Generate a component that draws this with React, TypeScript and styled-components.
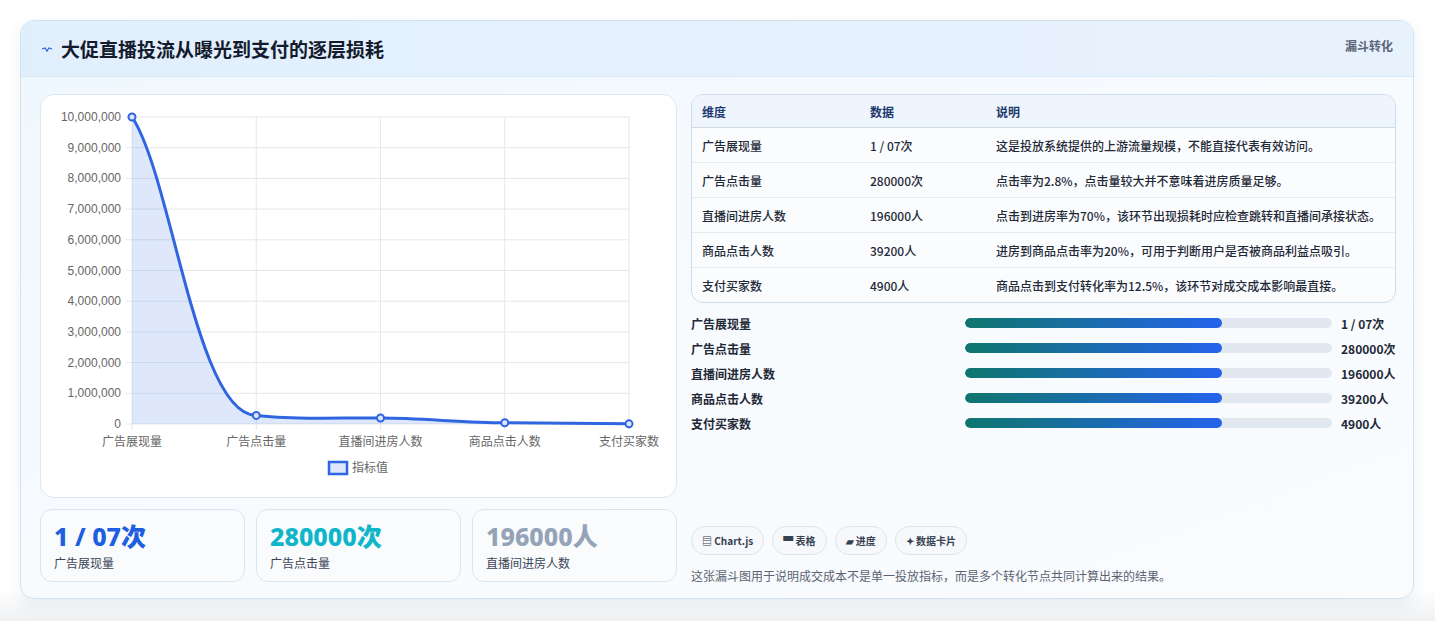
import React from 'react';
import styled, { createGlobalStyle } from 'styled-components';

const Global = createGlobalStyle`
  body {
    margin: 0;
    background: #f1f2f4;
    font-family: "Noto Sans CJK SC", "Noto Sans", sans-serif;
  }
`;

const Page = styled.div`
  height: 621px;
  padding: 20px 21px 0 20px;
  box-sizing: border-box;
  background: linear-gradient(180deg, #fff 0%, #fff 95%, #eef0f2 100%);
`;

const Card = styled.div`
  height: 579px;
  box-sizing: border-box;
  border: 1px solid #cfe3f1;
  border-radius: 14px;
  background: linear-gradient(160deg, #eef7fe 0%, #f8fbfe 55%, #f9fbfd 100%);
  box-shadow: 0 6px 16px rgba(30, 60, 100, 0.08);
  overflow: hidden;
`;

const Header = styled.div`
  height: 55px;
  display: flex;
  align-items: center;
  justify-content: space-between;
  padding: 0 20px 0 20px;
  background: linear-gradient(90deg, #e1effd, #e8f2fd);
  border-bottom: 1px solid #d7e8f6;
`;

const Title = styled.h1`
  margin: 0;
  font-size: 19px;
  font-weight: 700;
  color: #141b2d;
  display: flex;
  align-items: center;
  gap: 8px;
`;

const Tag = styled.span`
  font-size: 12px;
  font-weight: 700;
  color: #5b6779;
  align-self: flex-start;
  margin-top: 16px;
`;

const Body = styled.div`
  display: grid;
  grid-template-columns: 637px 705px;
  gap: 14px;
  padding: 17px 18px 0 19px;
`;

const Col = styled.div`
  display: flex;
  flex-direction: column;
`;

const ChartPanel = styled.div`
  height: 404px;
  box-sizing: border-box;
  background: #fff;
  border: 1px solid #dbe7f1;
  border-radius: 14px;
`;

const Stats = styled.div`
  display: grid;
  grid-template-columns: repeat(3, 1fr);
  gap: 11px;
  margin-top: 11px;
`;

const Stat = styled.div`
  height: 73px;
  box-sizing: border-box;
  border: 1px solid #d8e6f1;
  border-radius: 12px;
  background: #f9fbfd;
  padding: 10px 13px;
`;

const StatValue = styled.div<{ $color: string }>`
  font-size: 25px;
  font-weight: 800;
  line-height: 32px;
  color: ${p => p.$color};
  font-family: "Noto Sans", "Noto Sans CJK SC", sans-serif;
`;

const StatLabel = styled.div`
  font-size: 12px;
  color: #3b4556;
  margin-top: 2px;
`;

const Table = styled.table`
  width: 100%;
  border-collapse: separate;
  border-spacing: 0;
  border: 1px solid #cfdbe8;
  border-radius: 12px;
  overflow: hidden;
  font-size: 12px;
  background: #fafcfe;
  th {
    text-align: left;
    height: 32px;
    padding: 0 10px;
    color: #1e3a6e;
    font-weight: 700;
    background: #eef5fc;
    border-bottom: 1px solid #cfdbe8;
  }
  td {
    height: 34px;
    padding: 0 10px;
    color: #1f2937;
    font-weight: 500;
    border-bottom: 1px solid #e4ecf3;
  }
  tr:last-child td {
    border-bottom: none;
  }
`;

const Bars = styled.div`
  margin-top: 11px;
  display: flex;
  flex-direction: column;
  gap: 7px;
`;

const BarRow = styled.div`
  display: grid;
  grid-template-columns: 265px 367px 1fr;
  gap: 9px;
  align-items: center;
  height: 18px;
  font-size: 12px;
  font-weight: 600;
  color: #1f2937;
`;

const Track = styled.div`
  height: 10px;
  border-radius: 5px;
  background: #e2e8f0;
  overflow: hidden;
`;

const Fill = styled.div`
  height: 100%;
  border-radius: 5px;
  background: linear-gradient(90deg, #0f766e, #2563eb);
`;

const Pills = styled.div`
  display: flex;
  gap: 8px;
  margin-top: 94px;
`;

const Pill = styled.span`
  font-size: 10px;
  font-weight: 700;
  color: #374151;
  padding: 6px 10px;
  border: 1px solid #dde5ee;
  border-radius: 14px;
  background: #f6f8fb;
`;

const Note = styled.p`
  margin: 12px 0 0;
  font-size: 12px;
  color: #5b6472;
`;

const vals = [10000000, 280000, 196000, 39200, 4900];
const cats = ['广告展现量', '广告点击量', '直播间进房人数', '商品点击人数', '支付买家数'];
const shown = ['1 / 07次', '280000次', '196000人', '39200人', '4900人'];
const notes = [
  '这是投放系统提供的上游流量规模，不能直接代表有效访问。',
  '点击率为2.8%，点击量较大并不意味着进房质量足够。',
  '点击到进房率为70%，该环节出现损耗时应检查跳转和直播间承接状态。',
  '进房到商品点击率为20%，可用于判断用户是否被商品利益点吸引。',
  '商品点击到支付转化率为12.5%，该环节对成交成本影响最直接。',
];

function Chart() {
  // panel origin at (40,93)
  const x0 = 91, x1 = 588, yTop = 22, yBot = 329;
  const xs = vals.map((_, i) => x0 + ((x1 - x0) * i) / 4);
  const ys = vals.map(v => yBot - (v / 1e7) * (yBot - yTop));
  const line = `M${xs[0]},${ys[0]} C${xs[0] + 40},${ys[0] + 60} ${xs[1] - 60},${ys[1]} ${xs[1]},${ys[1]} C${xs[1] + 40},${ys[1] + 4} ${xs[2] - 60},${ys[2]} ${xs[2]},${ys[2]} C${xs[2] + 40},${ys[2]} ${xs[3] - 40},${ys[3]} ${xs[3]},${ys[3]} L${xs[4]},${ys[4]}`;
  return (
    <svg width="636" height="402" style={{ display: 'block' }}>
      {Array.from({ length: 11 }, (_, i) => {
        const y = yTop + ((yBot - yTop) * i) / 10;
        return (
          <g key={i}>
            <line x1={x0 - 6} x2={x1} y1={y} y2={y} stroke="#e5e7eb" />
            <text x={x0 - 11} y={y + 4} fontSize="12" fill="#666" textAnchor="end" fontFamily="Liberation Sans, sans-serif">
              {(1e7 - i * 1e6).toLocaleString('en-US')}
            </text>
          </g>
        );
      })}
      {xs.map((x, i) => (
        <g key={i}>
          <line x1={x} x2={x} y1={yTop} y2={yBot + 6} stroke="#e5e7eb" />
          <text x={x} y={yBot + 22} fontSize="12" fill="#666" textAnchor="middle" fontFamily="Noto Sans CJK SC, sans-serif">{cats[i]}</text>
        </g>
      ))}
      <path d={`${line} L${xs[4]},${yBot} L${xs[0]},${yBot} Z`} fill="rgba(59,110,230,0.16)" />
      <path d={line} fill="none" stroke="#2f66e0" strokeWidth="3" />
      {xs.map((x, i) => (
        <circle key={i} cx={x} cy={ys[i]} r="3.5" fill="#dde6fa" stroke="#2f66e0" strokeWidth="2" />
      ))}
      <rect x="288" y="367" width="18" height="12" fill="#dde6fa" stroke="#2f66e0" strokeWidth="2.5" />
      <text x="311" y="377" fontSize="12" fill="#666" fontFamily="Noto Sans CJK SC, sans-serif">指标值</text>
    </svg>
  );
}

export default function App() {
  return (
    <Page>
      <Global />
      <Card>
        <Header>
          <Title>
            <svg width="12" height="12" viewBox="0 0 12 12">
              <path d="M1 6 L4 5 L6 8 L8 5 L11 6" fill="none" stroke="#2f66e0" strokeWidth="1.3" />
            </svg>
            大促直播投流从曝光到支付的逐层损耗
          </Title>
          <Tag>漏斗转化</Tag>
        </Header>
        <Body>
          <Col>
            <ChartPanel>
              <Chart />
            </ChartPanel>
            <Stats>
              <Stat><StatValue $color="#1d5fe0">1 / 07次</StatValue><StatLabel>广告展现量</StatLabel></Stat>
              <Stat><StatValue $color="#0fb5c9">280000次</StatValue><StatLabel>广告点击量</StatLabel></Stat>
              <Stat><StatValue $color="#94a3b8">196000人</StatValue><StatLabel>直播间进房人数</StatLabel></Stat>
            </Stats>
          </Col>
          <Col>
            <Table>
              <thead>
                <tr><th style={{ width: 148 }}>维度</th><th style={{ width: 106 }}>数据</th><th>说明</th></tr>
              </thead>
              <tbody>
                {cats.map((c, i) => (
                  <tr key={c}><td>{c}</td><td>{shown[i]}</td><td>{notes[i]}</td></tr>
                ))}
              </tbody>
            </Table>
            <Bars>
              {cats.map((c, i) => (
                <BarRow key={c}>
                  <span>{c}</span>
                  <Track><Fill style={{ width: '70%' }} /></Track>
                  <span>{shown[i]}</span>
                </BarRow>
              ))}
            </Bars>
            <Pills>
              <Pill>▤ Chart.js</Pill>
              <Pill>▀ 表格</Pill>
              <Pill>▰ 进度</Pill>
              <Pill>✦ 数据卡片</Pill>
            </Pills>
            <Note>这张漏斗图用于说明成交成本不是单一投放指标，而是多个转化节点共同计算出来的结果。</Note>
          </Col>
        </Body>
      </Card>
    </Page>
  );
}
